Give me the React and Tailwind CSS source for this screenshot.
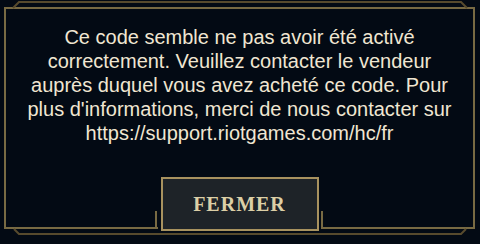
import React from 'react';

const lines = [
  'Ce code semble ne pas avoir été activé',
  'correctement. Veuillez contacter le vendeur',
  'auprès duquel vous avez acheté ce code. Pour',
  "plus d'informations, merci de nous contacter sur",
  'https://support.riotgames.com/hc/fr',
];

const FrameTrim = () => (
  <svg
    className="absolute inset-0 pointer-events-none"
    width="480"
    height="244"
    viewBox="0 0 480 244"
    fill="none"
  >
    {/* outer thin lines */}
    <polyline points="13,8 19,2 461,2 467,8" stroke="#574a2d" strokeWidth="2" />
    <polyline points="14,229 19,234 461,234 466,229" stroke="#574a2d" strokeWidth="2" />
    {/* uprights beside the button */}
    <line x1="156" y1="211" x2="156" y2="229" stroke="#786a43" strokeWidth="2" />
    <line x1="322" y1="211" x2="322" y2="229" stroke="#786a43" strokeWidth="2" />
  </svg>
);

export default function App() {
  return (
    <div className="relative w-[480px] h-[244px] overflow-hidden bg-[#030a14] pt-[7px] pl-[4px]">
      <div className="w-[471px] h-[222px] border-2 border-[#786a43] flex flex-col items-center">
        <p
          className="mt-[16px] whitespace-nowrap text-center text-[20px] leading-[24px] text-[#f0e6d2]"
          style={{ fontFamily: '"Liberation Sans", Arial, sans-serif' }}
        >
          {lines.map((l, i) => (
            <React.Fragment key={i}>
              {l}
              {i < lines.length - 1 && <br />}
            </React.Fragment>
          ))}
        </p>

        <button className="mt-[32px] w-[158px] h-[54px] shrink-0 border-2 border-[#a8925f] bg-[#1e2328] shadow-[0_0_0_3px_#030a14] flex items-center justify-center">
          <span
            className="text-[20px] font-bold text-[#dccfa6] tracking-[1px]"
            style={{ fontFamily: '"Liberation Serif", "Times New Roman", serif' }}
          >
            FERMER
          </span>
        </button>
      </div>

      <FrameTrim />
    </div>
  );
}
